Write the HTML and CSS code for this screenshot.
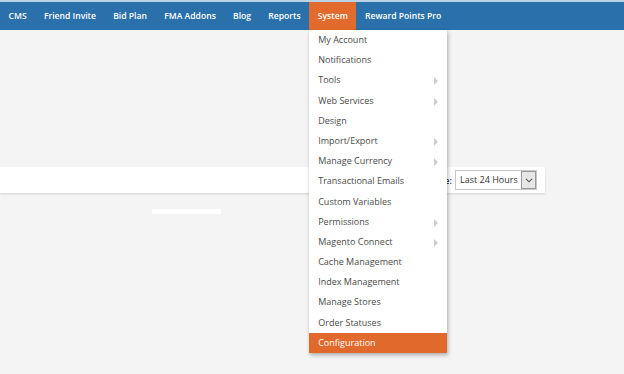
FILE: index.html
```html
<!DOCTYPE html>
<html>
<head>
<meta charset="utf-8">
<link rel="stylesheet" href="styles.css">
</head>
<body>
<div class="topline"></div>
<nav class="nav">
  <a class="nav-item">CMS</a>
  <a class="nav-item">Friend Invite</a>
  <a class="nav-item">Bid Plan</a>
  <a class="nav-item">FMA Addons</a>
  <a class="nav-item">Blog</a>
  <a class="nav-item">Reports</a>
  <div class="nav-item active">System
    <ul class="menu">
      <li>My Account</li>
      <li>Notifications</li>
      <li class="sub">Tools</li>
      <li class="sub">Web Services</li>
      <li>Design</li>
      <li class="sub">Import/Export</li>
      <li class="sub">Manage Currency</li>
      <li>Transactional Emails</li>
      <li>Custom Variables</li>
      <li class="sub">Permissions</li>
      <li class="sub">Magento Connect</li>
      <li>Cache Management</li>
      <li>Index Management</li>
      <li>Manage Stores</li>
      <li>Order Statuses</li>
      <li class="current">Configuration</li>
    </ul>
  </div>
  <a class="nav-item">Reward Points Pro</a>
</nav>
<main class="content">
  <div class="toolbar">
    <span class="label">Range:</span>
    <div class="select"><span class="value">Last 24 Hours</span><span class="caret"><svg width="8" height="5" viewBox="0 0 8 5"><path d="M1 0.8 L4 3.8 L7 0.8" fill="none" stroke="#555" stroke-width="1.1"/></svg></span></div>
  </div>
  <div class="tab"></div>
</main>
</body>
</html>
```
FILE: styles.css
```css
* { box-sizing: border-box; }
html, body { margin: 0; padding: 0; }
body {
  background: #f4f4f4;
  font-family: "Open Sans", "Noto Sans", sans-serif;
  width: 624px;
  height: 374px;
  overflow: hidden;
}
.topline { height: 2px; background: #b9d3e8; }
.nav {
  display: flex;
  height: 28px;
  background: #2a70aa;
  position: relative;
  z-index: 5;
}
.nav-item {
  color: #fff;
  font-size: 8.6px;
  font-weight: 600;
  line-height: 29px;
  padding: 0 8.6px;
  position: relative;
  white-space: nowrap;
}
.nav-item.active { background: #e26a2c; }
.menu {
  position: absolute;
  left: 0;
  top: 28px;
  width: 138px;
  margin: 0;
  padding: 0;
  list-style: none;
  background: #fff;
  box-shadow: 1px 2px 4px rgba(0,0,0,0.3);
}
.menu li {
  height: 20.2px;
  line-height: 20px;
  padding-left: 9px;
  color: #4a4a4a;
  font-size: 9px;
  font-weight: 400;
  position: relative;
}
.menu li.sub::after {
  content: "";
  position: absolute;
  right: 9px;
  top: 7px;
  border-left: 4px solid #cdcdcd;
  border-top: 4px solid transparent;
  border-bottom: 4px solid transparent;
}
.menu li.current { background: #e2692c; color: #fff; }
.content { padding-top: 137px; }
.toolbar {
  width: 545px;
  height: 26px;
  background: #fff;
  box-shadow: 0 1px 2px rgba(0,0,0,0.15);
  display: flex;
  align-items: center;
  justify-content: flex-end;
  padding-right: 8px;
  gap: 3px;
}
.label { font-size: 9px; color: #333; font-weight: 600; white-space: nowrap; }
.select {
  display: flex;
  align-items: stretch;
  height: 20px;
  width: 82px;
  border: 1px solid #c8c8c8;
  font-size: 9px;
  color: #333;
  white-space: nowrap;
}
.value { flex: 1; padding-left: 4px; line-height: 18px; }
.caret {
  width: 15px;
  background: #e6e6e6;
  border: 1px solid #9a9a9a;
  display: flex;
  align-items: center;
  justify-content: center;
}
.tab {
  margin: 16px 0 0 152px;
  width: 69px;
  height: 5px;
  background: #fff;
}
```
